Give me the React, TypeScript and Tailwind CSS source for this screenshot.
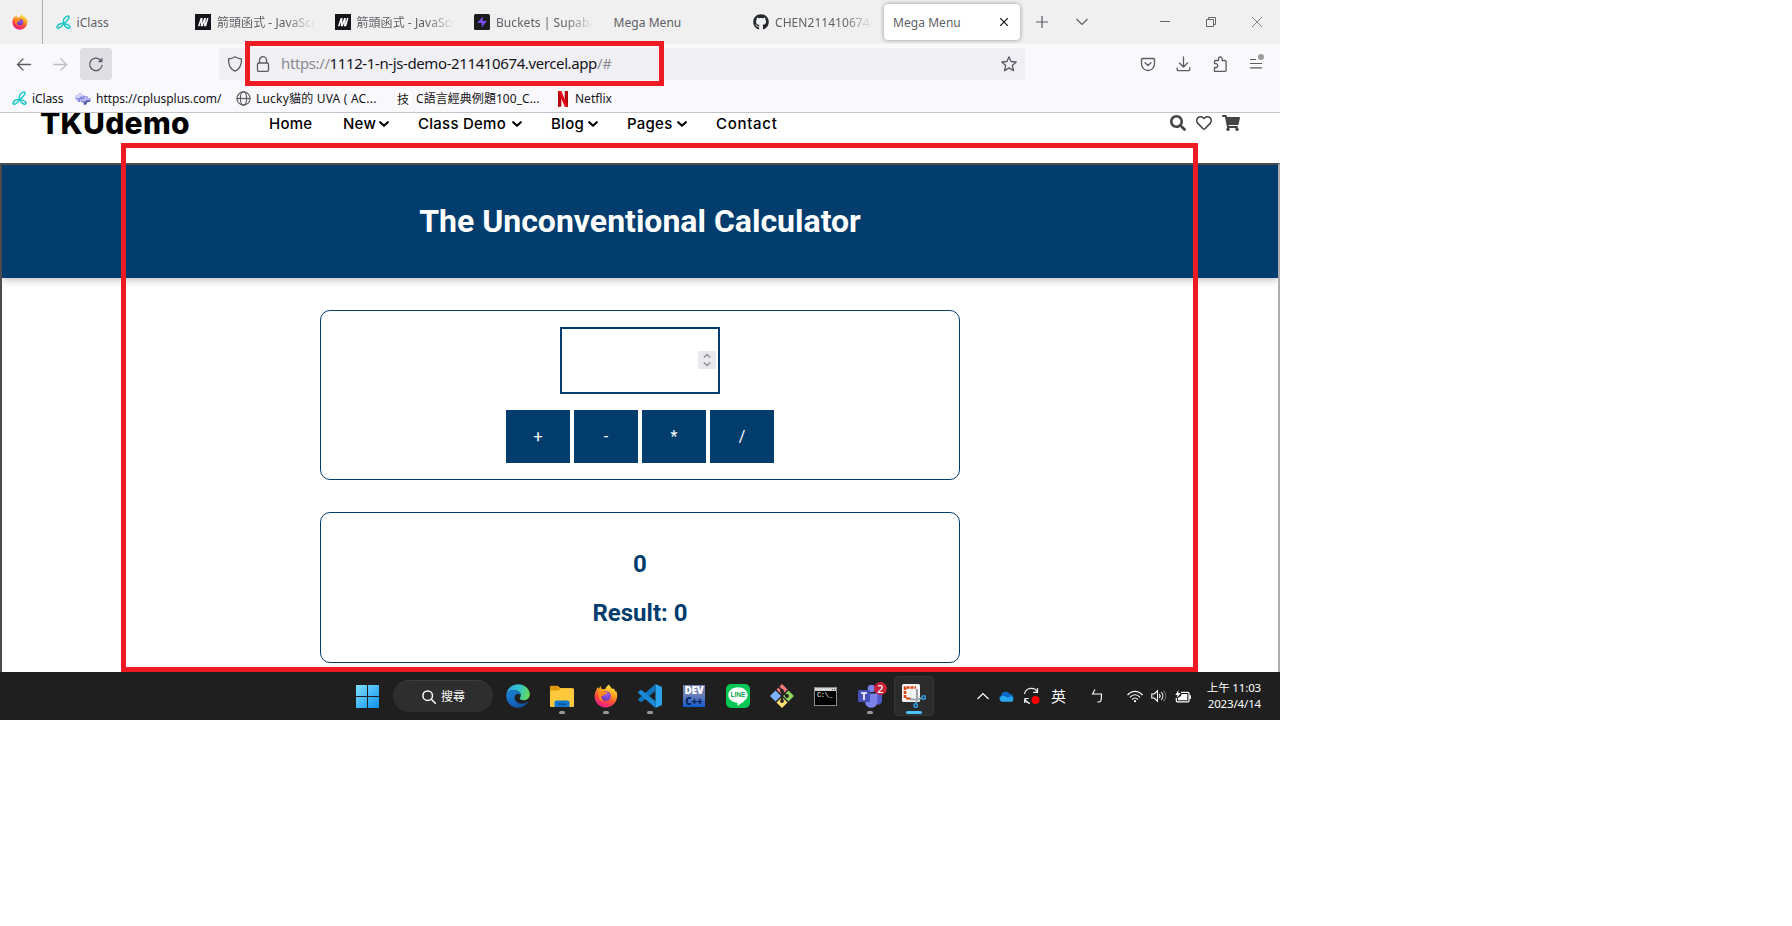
import React from "react";
import type { ReactNode } from "react";
import { FaGithub, FaRegHeart, FaSearch, FaShoppingCart } from "react-icons/fa";

const ui = "font-['Noto_Sans','Noto_Sans_CJK_TC',sans-serif]";

function Firefox({ className }: { className: string }) {
  return (
    <svg viewBox="0 0 24 24" className={className}>
      <defs>
        <linearGradient id="ffBody" x1="0.75" y1="0" x2="0.3" y2="1">
          <stop offset="0" stopColor="#fff14f" />
          <stop offset="0.35" stopColor="#ffa41f" />
          <stop offset="0.65" stopColor="#ff4a3d" />
          <stop offset="1" stopColor="#e6168f" />
        </linearGradient>
        <radialGradient id="ffGlobe" cx="0.6" cy="0.3" r="0.8">
          <stop offset="0" stopColor="#a45cf5" />
          <stop offset="1" stopColor="#5b33b8" />
        </radialGradient>
      </defs>
      <path
        d="M15.2 0.5c.6 2 2 3.300 3.300 4.600l1.300-.7c.8 1.200 1.400 2.200 1.700 3.300l.7-.6c1.100 2.300 1.300 5 .6 7.500C21.500 20 17 23.500 12 23.500 5.800 23.500.6 18.600.6 12.400c0-3 .9-5 2.100-6.900L3 3.200l1.900 1.600L6.400 2l1.300 3.300c1-.3 2.100-.2 3.100.1C11.900 3.500 13.200 1.700 15.200.5z"
        fill="url(#ffBody)"
      />
      <circle cx="12" cy="12" r="4.800" fill="url(#ffGlobe)" />
      <path d="M4.500 7.500c2-1.200 4.500-1.200 6.500.3l2.500.6c-.3 1.500-2 1.700-3 2.200-.8 1.300-2.200 1.500-3.200 1.700-.6 2 .5 4 2.700 4.900C6.500 18 4 14.500 4.500 7.500z" fill="#ff8a1c" />
    </svg>
  );
}

function IClassLogo({ className }: { className: string }) {
  return (
    <svg viewBox="0 0 16 16" className={className} fill="none" stroke="#16c5c5" strokeWidth="1.500" strokeLinecap="round" strokeLinejoin="round">
      <path d="M8.300 9.300C7.300 6 8.500 2.800 11.500 1.400c2-.8 3 .5 2 2.200C12 6 10.200 7.800 8.300 9.300zM8.300 9.300C5.500 8.800 2.600 10 1.300 12c-.8 1.400.3 2.500 1.800 1.900C5.300 13 7 11.500 8.300 9.300zM8.300 9.300c2.400-.2 4.700.8 6.200 2.500 1.100 1.300.2 2.600-1.400 2.300C11 13.500 9.300 11.800 8.300 9.300z" />
    </svg>
  );
}

function MdnLogo() {
  return (
    <svg viewBox="0 0 16 16" className="size-4 shrink-0">
      <rect width="16" height="16" fill="#15141a" />
      <path d="M3 12.200 5.600 4h2L7.200 9.500 9.200 4h1.600l-.3 5.500L12 4h1.500l-2.300 8.200H9l.3-4.200-1.500 4.200H5.700L6 7.500l-1.500 4.700z" fill="#fff" />
    </svg>
  );
}

function SupabaseLogo() {
  return (
    <svg viewBox="0 0 16 16" className="size-4 shrink-0">
      <rect width="16" height="16" rx="1.500" fill="#1c1c1c" />
      <path d="M8.700 2.800 3.200 9h4.600v4.200L13 7H8.700z" fill="#7a4df3" />
    </svg>
  );
}

function Tab({ icon, children, fade }: { icon?: ReactNode; children: ReactNode; fade?: boolean }) {
  return (
    <div className="flex h-full w-[139.5px] shrink-0 items-center gap-1.5 pl-[9px]">
      {icon}
      <span
        className={
          fade
            ? "w-[98px] overflow-hidden pt-px whitespace-nowrap [mask-image:linear-gradient(to_right,#000_70%,transparent_100%)]"
            : "pt-px whitespace-nowrap"
        }
      >
        {children}
      </span>
    </div>
  );
}

function TabStrip() {
  return (
    <div className="flex h-11 items-center bg-[#f0f0f0] text-xs tracking-[0.05px] text-[#5f5f66]">
      <div className="flex h-full w-[43px] items-center border-r border-[#b0b0b0] pl-3">
        <Firefox className="size-4" />
      </div>
      <div className="flex h-full w-[841px] pl-[3.500px]">
        <Tab icon={<IClassLogo className="size-[15px]" />}>iClass</Tab>
        <Tab fade icon={<MdnLogo />}>箭頭函式 - JavaScript</Tab>
        <Tab fade icon={<MdnLogo />}>箭頭函式 - JavaScript</Tab>
        <Tab fade icon={<SupabaseLogo />}>Buckets | Supabase</Tab>
        <Tab>Mega Menu</Tab>
        <Tab fade icon={<FaGithub className="size-4 shrink-0 text-[#24292f]" />}>CHEN211410674/1</Tab>
      </div>
      <div className="flex h-9 w-[136px] items-center justify-between rounded bg-white pr-3 pl-[9px] shadow-[0_0_4px_rgba(0,0,0,0.4)]">
        <span className="pt-px">Mega Menu</span>
        <svg viewBox="0 0 8 8" className="size-2" stroke="#15141a" strokeWidth="1.200">
          <path d="M0 0 8 8M8 0 0 8" />
        </svg>
      </div>
      <svg viewBox="0 0 12 12" className="ml-[15.5px] size-3" stroke="#5b5b66" strokeWidth="1.200">
        <path d="M6 0v12M0 6h12" />
      </svg>
      <svg viewBox="0 0 12 8" className="ml-[28.5px] h-2 w-3" fill="none" stroke="#5b5b66" strokeWidth="1.200">
        <path d="M.5 1 6 6.500 11.500 1" />
      </svg>
      <svg viewBox="0 0 10 10" className="ml-[72px] size-2.5" stroke="#666" strokeWidth="1">
        <path d="M0 4.500h10" />
      </svg>
      <svg viewBox="0 0 10 10" className="ml-9 size-2.5" fill="none" stroke="#666" strokeWidth="1">
        <path d="M.5 2.500h7v7h-7zM2.500 2.500v-2h7v7h-2" />
      </svg>
      <svg viewBox="0 0 10 10" className="ml-9 size-2.5" stroke="#777" strokeWidth="0.900">
        <path d="M0 0 10 10M10 0 0 10" />
      </svg>
    </div>
  );
}

function NavBar() {
  return (
    <div className="flex h-10 items-center">
      <svg viewBox="0 0 16 16" className="ml-4 size-4" fill="none" stroke="#5b5b66" strokeWidth="1.300" strokeLinecap="round">
        <path d="M1.500 8.500h13M7 3 1.500 8.500 7 14" />
      </svg>
      <svg viewBox="0 0 16 16" className="ml-5 size-4" fill="none" stroke="#bdbdc3" strokeWidth="1.300" strokeLinecap="round">
        <path d="M1.500 8.500h13M9 3l5.500 5.500L9 14" />
      </svg>
      <div className="ml-3 flex size-8 items-center justify-center rounded bg-[#dedee3]">
        <svg viewBox="0 0 16 16" className="size-4" fill="none" stroke="#5b5b66" strokeWidth="1.300" strokeLinecap="round">
          <path d="M14 9.500A6.200 6.200 0 1 1 12.300 4" />
          <path d="M14.500 1.500v4.800H9.700z" fill="#5b5b66" stroke="none" />
        </svg>
      </div>
      <div className="relative ml-[107px] flex h-8 w-[806px] items-center rounded bg-[#f0f0f4] pl-2">
        <svg viewBox="0 0 16 16" className="size-4" fill="none" stroke="#5b5b66" strokeWidth="1.300" strokeLinejoin="round">
          <path d="M8 .8C10 2 12 2.700 14.500 3c.2 5.500-1.500 10-6.500 12.200C3 13 1.300 8.500 1.500 3 4 2.700 6 2 8 .8z" />
        </svg>
        <svg viewBox="0 0 14 16" className="ml-[13px] h-4 w-3.5" fill="none" stroke="#5b5b66" strokeWidth="1.300">
          <rect x="1.500" y="7" width="11" height="8.300" rx="1.200" />
          <path d="M3.500 7V4.200a3.500 3.500 0 0 1 7 0V7" />
        </svg>
        <div className="ml-[11px] w-[701px] pb-0.5 text-[15px] tracking-[-0.39px] whitespace-nowrap text-[#15141a]">
          <span className="text-[#8b8b92]">https://</span>1112-1-n-js-demo-211410674.vercel.app
          <span className="text-[#8b8b92]">/#</span>
        </div>
        <svg viewBox="0 0 16 16" className="ml-[19px] size-4" fill="none" stroke="#5b5b66" strokeWidth="1.300" strokeLinejoin="round">
          <path d="m8 .8 2 4.700 5.200.5-3.900 3.400 1.200 5.200L8 11.900l-4.500 2.700 1.200-5.200L.8 6 6 5.500z" />
        </svg>
        <div className="pointer-events-none absolute -top-[7px] left-[26px] h-[45px] w-[419px] border-5 border-[#ed1c24]" />
      </div>
      <svg viewBox="0 0 16 16" className="ml-[115px] size-4" fill="none" stroke="#5b5b66" strokeWidth="1.300" strokeLinecap="round" strokeLinejoin="round">
        <path d="M2.500 2.500h11c.6 0 1 .4 1 1V8a6.500 6.500 0 0 1-13 0V3.500c0-.6.4-1 1-1zM5 6.800 8 9.500l3-2.700" />
      </svg>
      <svg viewBox="0 0 16 16" className="ml-5 size-4" fill="none" stroke="#5b5b66" strokeWidth="1.300" strokeLinecap="round" strokeLinejoin="round">
        <path d="M7.500 .8v10M3.500 7l4 4 4-4M1.200 12v1.500c0 .7.500 1.200 1.200 1.200h10.200c.7 0 1.200-.5 1.200-1.200V12" />
      </svg>
      <svg viewBox="0 0 16 16" className="ml-5 size-4" fill="none" stroke="#5b5b66" strokeWidth="1.300" strokeLinejoin="round">
        <path d="M2.500 15.300V11.500h1.300a1.700 1.700 0 0 0 0-3.800H2.500V5.500c0-.6.3-1 1-1h3V2.800a1.800 1.800 0 0 1 3.600 0v1.700h3c.6 0 1 .4 1 1v8.800c0 .6-.4 1-1 1z" />
      </svg>
      <div className="relative ml-5 flex h-4 w-4 items-center">
        <svg viewBox="0 0 16 16" className="size-4" stroke="#5b5b66" strokeWidth="1.200">
          <path d="M2 3.500h6M2 7.500h12M2 11.900h12" />
        </svg>
        <span className="absolute -top-0.5 left-2.5 size-1.5 rounded-full bg-[#9a9a9a]" />
      </div>
    </div>
  );
}

function Bookmark({ icon, width, children }: { icon: ReactNode; width: string; children: ReactNode }) {
  return (
    <div className={`flex shrink-0 items-center gap-[5px] whitespace-nowrap ${width}`}>
      {icon}
      <span className="pt-px">{children}</span>
    </div>
  );
}

function Bookmarks() {
  return (
    <div className="flex h-[29px] items-center pl-3 text-xs text-[#15141a]">
      <Bookmark width="w-[63px]" icon={<IClassLogo className="size-[15px]" />}>
        <span className="tracking-[-0.1px]">iClass</span>
      </Bookmark>
      <Bookmark
        width="w-[161px]"
        icon={
          <svg viewBox="0 0 16 14" className="h-3.5 w-4">
            <path d="M.5 3.500h2.200L4.200 1.200h2.300v1.800H9L10 5 8.500 7.500H6L5 10H2.700V7.500H.5z" fill="#8a8ce0" />
            <path d="M.5 3.500h2.200L4.200 1.200h2.300v1.800H9L8 4.500H5.500L4.500 6H.5z" fill="#d3d5fa" />
            <path d="M6 7h2.500L10 4.200h2.500v2.300h3L15.200 10h-2.700L11 12.800H8.700V10.200H6z" fill="#5355b3" />
            <path d="M6 7h2.500L10 4.200h2.500v2.300h3l-1 1.700h-3l-1.200 1.300H6z" fill="#b4b6f0" />
          </svg>
        }
      >
        <span className="tracking-[-0.04px]">https://cplusplus.com/</span>
      </Bookmark>
      <Bookmark
        width="w-[159px]"
        icon={
          <svg viewBox="0 0 16 16" className="size-[15px]" fill="none" stroke="#5b5b66" strokeWidth="1.300">
            <circle cx="8" cy="8" r="7" />
            <ellipse cx="8" cy="8" rx="3.300" ry="7" />
            <path d="M1 8h14" />
          </svg>
        }
      >
        <span className="tracking-[0.2px]">Lucky貓的 UVA ( AC...</span>
      </Bookmark>
      <Bookmark
        width="w-[162px]"
        icon={<span className="flex size-4 items-center justify-center bg-white font-['Noto_Sans_CJK_TC',sans-serif] text-[12px] leading-4">技</span>}
      >
        <span className="tracking-[0.05px]">C語言經典例題100_C...</span>
      </Bookmark>
      <Bookmark
        width="w-[80px]"
        icon={
          <svg viewBox="0 0 12 16" className="h-4 w-3">
            <path d="M1 0h3.300v15.500L1 16zM7.700 0H11v16l-3.300-.5z" fill="#b1060f" />
            <path d="M1 0h3.300L11 16l-3.300-.5z" fill="#e50914" />
          </svg>
        }
      >
        <span className="pl-px">Netflix</span>
      </Bookmark>
    </div>
  );
}

function MenuItem({ width, chevron, children }: { width: string; chevron?: boolean; children: ReactNode }) {
  return (
    <div className={`flex shrink-0 items-center justify-between whitespace-nowrap ${width}`}>
      <span>{children}</span>
      {chevron && (
        <svg viewBox="0 0 10 6" className="h-1.5 w-2.5 shrink-0" fill="none" stroke="#000" strokeWidth="2.100" strokeLinecap="round">
          <path d="M1.200 1.200 5 4.700l3.800-3.500" />
        </svg>
      )}
    </div>
  );
}

function SiteHeader() {
  return (
    <div className="flex h-[50px] items-start overflow-hidden bg-white font-['Inter','Noto_Sans',sans-serif] text-black">
      <div className="-mt-[8px] ml-10 w-[229px] text-[30px] leading-9 font-extrabold tracking-[0.3px] whitespace-nowrap">TKUdemo</div>
      <nav className="flex h-[22px] items-center gap-[29px] text-[15px] font-medium tracking-[0.25px]">
        <MenuItem width="w-[45px]">Home</MenuItem>
        <MenuItem width="w-[46px]" chevron>New</MenuItem>
        <MenuItem width="w-[104px]" chevron>Class Demo</MenuItem>
        <MenuItem width="w-[47px]" chevron>Blog</MenuItem>
        <MenuItem width="w-[60px]" chevron>Pages</MenuItem>
        <MenuItem width="w-[61px]">
          <span className="tracking-[0.7px]">Contact</span>
        </MenuItem>
      </nav>
      <div className="ml-[393px] flex h-5 items-center gap-2.5 text-[#444]">
        <FaSearch className="size-4" />
        <FaRegHeart className="size-4" />
        <FaShoppingCart className="h-4 w-[18px]" />
      </div>
    </div>
  );
}

function CalcFrame() {
  return (
    <div className="h-[509px] overflow-hidden border-t-2 border-r-2 border-l-2 border-t-[#4c4c4c] border-r-[#adadad] border-l-[#4c4c4c] bg-white font-['Roboto',sans-serif]">
      <header className="flex h-[113px] items-center justify-center bg-[#023d6d] pb-0.5 shadow-[0_2px_8px_rgba(0,0,0,0.26)]">
        <h1 className="text-[32px] leading-[38px] font-bold text-white">The Unconventional Calculator</h1>
      </header>
      <section className="mx-auto mt-8 flex h-[170px] w-[640px] flex-col items-center rounded-[10px] border border-[#023d6d] pt-4">
        <div className="flex h-[67px] w-40 items-center justify-end border-2 border-[#023d6d] pr-0.5 pb-px">
          <div className="flex h-[18px] w-[18px] flex-col items-center justify-center bg-[#e9e9ed]">
            <svg viewBox="0 0 8 14" className="h-3.5 w-2" fill="none" stroke="#8f8f9d" strokeWidth="1.500">
              <path d="M.8 4.500 4 1.500l3.200 3M.8 9.500l3.200 3 3.200-3" />
            </svg>
          </div>
        </div>
        <div className="mt-4 flex gap-1 text-base text-white">
          <button className="h-[53px] w-16 bg-[#023d6d]">+</button>
          <button className="h-[53px] w-16 bg-[#023d6d]">-</button>
          <button className="h-[53px] w-16 bg-[#023d6d]">*</button>
          <button className="h-[53px] w-16 bg-[#023d6d]">/</button>
        </div>
      </section>
      <section className="mx-auto mt-8 flex h-[151px] w-[640px] flex-col items-center rounded-[10px] border border-[#023d6d] pt-[37px] text-2xl leading-7 font-bold text-[#023d6d]">
        <h2>0</h2>
        <h2 className="mt-[21px]">Result: 0</h2>
      </section>
    </div>
  );
}

function TaskApp({ dot, children }: { dot?: boolean; children: ReactNode }) {
  return (
    <div className="relative flex h-10 w-11 shrink-0 items-center justify-center">
      {children}
      {dot && <span className="absolute bottom-0.5 left-[19px] h-[3px] w-1.5 rounded-full bg-[#9a9a9a]" />}
    </div>
  );
}

function TaskApps() {
  return (
    <div className="ml-[3px] flex">
      <TaskApp>
        <svg viewBox="0 0 24 24" className="size-6">
          <defs>
            <linearGradient id="edTop" x1="0" y1="0.3" x2="1" y2="0.5">
              <stop offset="0" stopColor="#2aa5e8" />
              <stop offset="0.550" stopColor="#35c4c9" />
              <stop offset="1" stopColor="#67dc52" />
            </linearGradient>
            <linearGradient id="edLow" x1="0" y1="0" x2="0.8" y2="1">
              <stop offset="0" stopColor="#1b86d8" />
              <stop offset="1" stopColor="#0c4fa3" />
            </linearGradient>
          </defs>
          <path d="M.3 11C1 4.500 6 .2 12 .2c6.500 0 11.800 4.500 11.800 10 0 3.700-2.800 6-6 6-2.600 0-4.200-1-4-1.900.1-.6 1-1.100 1-2.800 0-3-3.300-5.400-7.300-5.400C4 6.100 1.300 8 .3 11z" fill="url(#edTop)" />
          <path d="M.2 12C.3 8.500 4 6 7.500 6c4 0 7.300 2.500 7.300 5.500-1-1.500-2.800-2-4.300-1.200-3.500 2-2 9 5 9.200 2.200 0 4-.5 5.700-1.600.5-.3.9.1.6.6A11.800 11.800 0 0 1 .2 12z" fill="url(#edLow)" />
        </svg>
      </TaskApp>
      <TaskApp dot>
        <svg viewBox="0 0 24 24" className="size-6">
          <path d="M0 3c0-.8.500-1.300 1.300-1.300h6.500L10.500 4H22v6H0z" fill="#e09b0d" />
          <path d="M0 6.500h8.500l2-2.300h12.200c.8 0 1.300.5 1.300 1.300v16.200c0 .8-.5 1.300-1.300 1.300H1.300C.5 23 0 22.500 0 21.700z" fill="#fcca3c" />
          <path d="M4.500 23v-4.500c0-1.300.8-2 2-2h11c1.200 0 2 .7 2 2V23z" fill="#1479cb" />
          <path d="M8 19.500h8v1.300H8z" fill="#0b4f8f" />
        </svg>
      </TaskApp>
      <TaskApp dot><Firefox className="size-6" /></TaskApp>
      <TaskApp dot>
        <svg viewBox="0 0 24 24" className="size-6">
          <path d="M17.500 0 24 3v18l-6.500 3z" fill="#2aa3ec" />
          <path d="M17.500 0v6.700L3.300 18.200.2 16.300V14.900z" fill="#0f74bd" />
          <path d="M17.500 24v-6.700L3.300 5.800.2 7.700v1.400z" fill="#1a8ad6" />
        </svg>
      </TaskApp>
      <TaskApp>
        <div className="flex h-[22px] w-[22px] flex-col overflow-hidden bg-gradient-to-b from-[#6f80b4] from-40% to-[#0a5ad0] text-center font-['Open_Sans',sans-serif] text-[10px] leading-[11px] font-extrabold">
          <span className="h-[11px] tracking-[-0.3px] text-white">DEV</span>
          <span className="h-[11px] tracking-[-0.3px] text-[#06245c]">C++</span>
        </div>
      </TaskApp>
      <TaskApp>
        <div className="relative flex size-6 items-center justify-center rounded-[5px] bg-[#06c755]">
          <svg viewBox="0 0 24 24" className="absolute inset-0 size-6">
            <path d="M12 3.300c5.500 0 9.700 3.500 9.700 7.700 0 4-5 7.500-9.500 10.400-.7.400-.9 0-.8-.7l.2-1.900C6.300 18.400 2.300 15.500 2.300 11.100c0-4.200 4.200-7.800 9.700-7.800z" fill="#fff" />
          </svg>
          <span className="relative -mt-0.5 font-['Liberation_Sans',sans-serif] text-[6.500px] font-bold text-[#06a748]">LINE</span>
        </div>
      </TaskApp>
      <TaskApp>
        <svg viewBox="0 0 24 24" className="size-6">
          <path d="M12 0l5.500 5.500L12 11 6.500 5.500z" fill="#f47a7a" />
          <path d="M5.500 6.500 11 12l-5.500 5.500L0 12z" fill="#80b3ff" />
          <path d="M18.500 6.500 24 12l-5.500 5.500L13 12z" fill="#8ed65c" />
          <path d="M12 13l5.500 5.500L12 24l-5.500-5.500z" fill="#ffe070" />
          <path d="M8 2l4 4.500v10M12 7l4.500 5" stroke="#241f20" strokeWidth="1.800" fill="none" />
          <circle cx="12" cy="7" r="1.900" fill="#241f20" />
          <circle cx="17" cy="12" r="1.900" fill="#241f20" />
          <circle cx="12" cy="17" r="1.900" fill="#241f20" />
        </svg>
      </TaskApp>
      <TaskApp>
        <div className="mr-px flex h-[19px] w-[23px] flex-col border border-[#8a8a8a] bg-black">
          <div className="flex h-[3px] items-center justify-end gap-px bg-[#d5d5d5] pr-px">
            <span className="size-px bg-[#555]" />
            <span className="size-px bg-[#555]" />
          </div>
          <span className="pl-0.5 font-['Liberation_Mono',monospace] text-[7px] leading-[8px] tracking-[-0.4px] text-white">C:\_</span>
        </div>
      </TaskApp>
      <TaskApp dot>
        <div className="relative size-6">
          <svg viewBox="0 0 24 24" className="size-6">
            <circle cx="21.500" cy="7" r="2.600" fill="#5059c9" />
            <circle cx="13.500" cy="4.500" r="3.800" fill="#7b83eb" />
            <path d="M17 9.500h7v7a4 4 0 0 1-5 4z" fill="#5059c9" />
            <path d="M7 9.500h12.500V17c0 4-2.700 6.800-6.300 6.800S7 21 7 17z" fill="#7b83eb" />
            <rect x="0" y="6" width="12" height="12" rx="1" fill="#464eb8" />
            <path d="M3 9h6M6 9v7" stroke="#fff" strokeWidth="1.600" />
          </svg>
          <span className="absolute -top-[2px] left-4 flex size-[13px] items-center justify-center rounded-full bg-[#c8203a] text-[11px] leading-none font-medium text-white">2</span>
        </div>
      </TaskApp>
      <div className="relative ml-0.5 flex h-10 w-10 items-center justify-center rounded border border-[#353535] bg-[#2b2b2b]">
        <svg viewBox="0 0 24 24" className="size-6">
          <rect x="0" y="0" width="18" height="18" rx="1.500" fill="#f4f4f4" />
          <path d="M3 14V3.500h11" fill="none" stroke="#d8420f" strokeWidth="2.600" strokeDasharray="3 1" />
          <path d="M4 14.500h5" fill="none" stroke="#d8420f" strokeWidth="2" />
          <path d="M15 5v10M8 15.500h9" stroke="#9ea4aa" strokeWidth="2.200" />
          <path d="M15 16l-1 3M16.500 15.500l3-1.500" stroke="#8ab" strokeWidth="1.500" />
          <circle cx="21.700" cy="13.500" r="1.800" fill="none" stroke="#2f9fe8" strokeWidth="1.500" />
          <circle cx="13.700" cy="21.500" r="1.800" fill="none" stroke="#2f9fe8" strokeWidth="1.500" />
        </svg>
        <span className="absolute bottom-px left-[11px] h-[3px] w-4 rounded-full bg-[#4cc2ff]" />
      </div>
    </div>
  );
}

function Tray() {
  return (
    <div className="ml-[43px] flex items-center text-white">
      <svg viewBox="0 0 12 8" className="h-2 w-3" fill="none" stroke="#fff" strokeWidth="1.200">
        <path d="M.5 7 6 1.500 11.500 7" />
      </svg>
      <svg viewBox="0 0 16 11" className="ml-2.5 h-[11px] w-4">
        <path d="M3 10.500A3 3 0 0 1 2 4.800 4.800 4.800 0 0 1 10.800 3 4 4 0 0 1 14.500 7z" fill="#0a66c2" />
        <path d="M3.300 10.800a3 3 0 0 1-.5-5.700c2-.8 4 .4 6 1.700l3-1.500A3 3 0 0 1 13 10.800z" fill="#28a8ea" />
      </svg>
      <svg viewBox="0 0 18 18" className="ml-2 size-[18px]" fill="none" stroke="#eee" strokeWidth="1.200">
        <path d="M1.500 7A7 7 0 0 1 14.500 5M14.500 1v4.300h-4.300M1.500 11.500 5.700 11.500M1.700 16v-4.300M2 12a7 7 0 0 0 5 4.500" />
        <circle cx="12.500" cy="13" r="4" fill="#f00" stroke="none" />
      </svg>
      <span className="ml-2.5 w-4 text-[15px]">英</span>
      <svg viewBox="0 0 12 14" className="ml-6 h-3.5 w-3" fill="none" stroke="#fff" strokeWidth="1.100">
        <path d="M4 .5 1.500 5h9c0 3.500-.3 6-.8 7-.4.900-1.700 1-3.200.9" />
      </svg>
      <svg viewBox="0 0 16 13" className="ml-6 h-[13px] w-4" fill="none" stroke="#fff" strokeWidth="1.200">
        <path d="M.5 5C5 .2 11 .2 15.500 5M2.900 7.300c3-3.400 7.200-3.400 10.200 0M5.200 9.500c1.700-2 3.900-2 5.600 0" />
        <circle cx="8" cy="11.200" r="1.100" fill="#fff" stroke="none" />
      </svg>
      <svg viewBox="0 0 16 14" className="ml-2 h-3.5 w-4" fill="none" stroke="#fff" strokeWidth="1.100">
        <path d="M.8 5h2.400L6.500 1.800v10.400L3.200 9H.8zM8.300 5c1 1.200 1 2.800 0 4M10.300 3c2 2.300 2 5.700 0 8" />
        <path d="M12.500 1.500c3 3.300 3 7.700 0 11" stroke="#777" />
      </svg>
      <svg viewBox="0 0 16 13" className="ml-2 h-[13px] w-4" fill="none" stroke="#fff" strokeWidth="1.200">
        <path d="M6 2.300h6.800c.7 0 1.200.5 1.200 1.200v7.200c0 .7-.5 1.200-1.200 1.200H2.500c-.7 0-1.200-.5-1.200-1.200V8M15.300 5.200v3.800" />
        <path d="M6.500 4h5.800v6.300H3V8l3-2zM3.500 0 .3 5h2.200L2 8l3.700-5H3.300z" fill="#fff" stroke="none" />
      </svg>
      <div className="ml-3 w-[58px] text-right text-[11.5px] leading-4 tracking-[-0.15px] whitespace-nowrap">
        <div>上午 11:03</div>
        <div>2023/4/14</div>
      </div>
    </div>
  );
}

function Taskbar() {
  return (
    <div className="flex h-12 items-center bg-[#1f1f1f]">
      <svg viewBox="0 0 23 23" className="ml-[356px] size-[23px]">
        <defs>
          <linearGradient id="win" gradientUnits="userSpaceOnUse" x1="0" y1="0" x2="23" y2="23">
            <stop offset="0" stopColor="#7fe0ff" />
            <stop offset="1" stopColor="#0e90f2" />
          </linearGradient>
        </defs>
        <path d="M0 0h11v11H0zM12 0h11v11H12zM0 12h11v11H0zM12 12h11v11H12z" fill="url(#win)" />
      </svg>
      <div className="ml-3.5 flex h-8 w-[100px] items-center rounded-full border-t border-[#3d3d3d] bg-[#2e2e2e] pl-[29px] text-xs text-white">
        <svg viewBox="0 0 14 14" className="size-3.5" fill="none" stroke="#fff" strokeWidth="1.500" strokeLinecap="round">
          <circle cx="5.700" cy="5.700" r="4.800" />
          <path d="m9.300 9.300 4 4" />
        </svg>
        <span className="ml-[5px]">搜尋</span>
      </div>
      <TaskApps />
      <Tray />
    </div>
  );
}

export default function App() {
  return (
    <div className="h-[926px] w-[1792px] overflow-hidden bg-white">
      <div className={`relative flex h-[720px] w-[1280px] flex-col overflow-hidden ${ui}`}>
        <TabStrip />
        <div className="h-[69px] border-b border-[#c4c4c8] bg-[#f9f9fb]">
          <NavBar />
          <Bookmarks />
        </div>
        <SiteHeader />
        <CalcFrame />
        <Taskbar />
        <div className="pointer-events-none absolute top-[143px] left-[121px] h-[529px] w-[1077px] border-5 border-[#ed1c24]" />
      </div>
    </div>
  );
}
